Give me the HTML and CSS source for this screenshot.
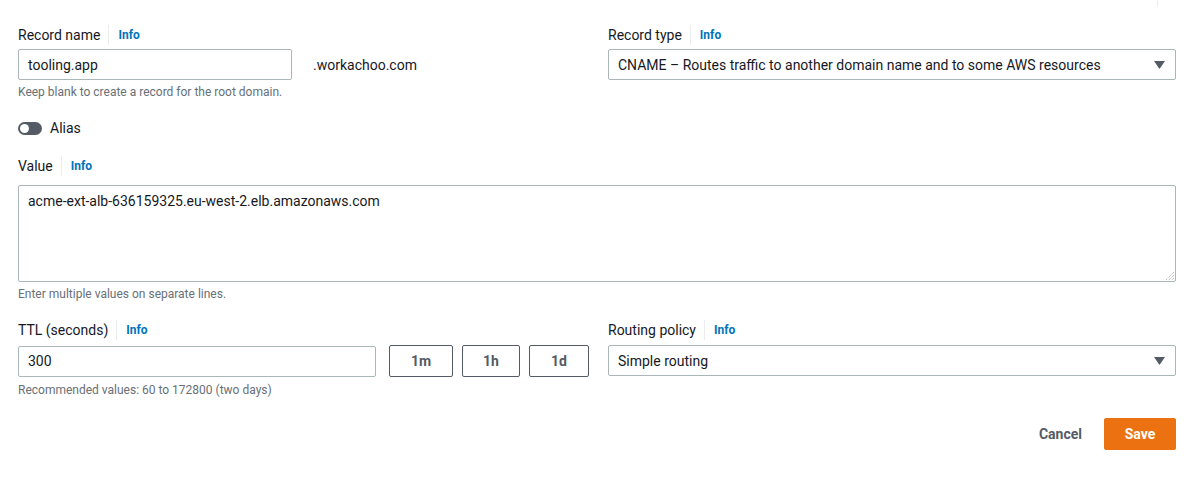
FILE: index.html
```html
<!DOCTYPE html>
<html>
<head>
<meta charset="utf-8">
<link rel="stylesheet" href="styles.css">
</head>
<body>
<form class="form">
  <div class="grid">
    <div class="field">
      <div class="label-row"><span class="label">Record name</span><span class="sep"></span><a class="info">Info</a></div>
      <div class="name-row">
        <div class="input name-input">tooling.app</div>
        <span class="suffix">.workachoo.com</span>
      </div>
      <div class="help">Keep blank to create a record for the root domain.</div>
    </div>
    <div class="field">
      <div class="label-row"><span class="label">Record type</span><span class="sep"></span><a class="info">Info</a></div>
      <div class="input select">
        <span>CNAME – Routes traffic to another domain name and to some AWS resources</span>
        <svg class="caret" width="11" height="8" viewBox="0 0 11 8"><path d="M0 0h11L5.5 8z" fill="#545b64"/></svg>
      </div>
    </div>
  </div>

  <div class="alias-row">
    <span class="toggle"><span class="knob"></span></span>
    <span class="alias-text">Alias</span>
  </div>

  <div class="value-field">
    <div class="label-row"><span class="label">Value</span><span class="sep"></span><a class="info">Info</a></div>
    <div class="textarea">acme-ext-alb-636159325.eu-west-2.elb.amazonaws.com
      <svg class="grip" width="9" height="9" viewBox="0 0 9 9"><path d="M9 1L1 9M9 4L4 9M9 7L7 9" stroke="#8a8f94" stroke-width="0.8" stroke-dasharray="1 1"/></svg>
    </div>
    <div class="help">Enter multiple values on separate lines.</div>
  </div>

  <div class="grid ttl-grid">
    <div class="field">
      <div class="label-row"><span class="label">TTL (seconds)</span><span class="sep"></span><a class="info">Info</a></div>
      <div class="ttl-row">
        <div class="input ttl-input">300</div>
        <button type="button" class="btn b1m">1m</button>
        <button type="button" class="btn b1h">1h</button>
        <button type="button" class="btn b1d">1d</button>
      </div>
      <div class="help ttl-help">Recommended values: 60 to 172800 (two days)</div>
    </div>
    <div class="field">
      <div class="label-row"><span class="label">Routing policy</span><span class="sep"></span><a class="info">Info</a></div>
      <div class="input select">
        <span>Simple routing</span>
        <svg class="caret" width="11" height="8" viewBox="0 0 11 8"><path d="M0 0h11L5.5 8z" fill="#545b64"/></svg>
      </div>
    </div>
  </div>

  <div class="actions">
    <button type="button" class="cancel">Cancel</button>
    <button type="button" class="save">Save</button>
  </div>
</form>
<span class="edge"></span>
</body>
</html>
```
FILE: styles.css
```css
* { box-sizing: border-box; }
body {
  margin: 0;
  background: #fff;
  font-family: Roboto, "Liberation Sans", sans-serif;
  color: #16191f;
  font-size: 14px;
}
.form {
  padding: 25px 27px 0 18px;
}
.grid {
  display: grid;
  grid-template-columns: 574px 1fr;
  column-gap: 16px;
}
.label-row {
  display: flex;
  align-items: center;
  height: 20px;
  margin-bottom: 4px;
}
.label { font-size: 14px; color: #16191f; }
.sep {
  width: 1px;
  height: 20px;
  background: #eaeded;
  margin: 0 9px 0 8px;
}
.info {
  font-size: 12px;
  font-weight: 700;
  color: #0073bb;
}
.input {
  height: 31px;
  border: 1px solid #aab7b8;
  border-radius: 2px;
  padding: 0 9px;
  display: flex;
  align-items: center;
  font-size: 14px;
  color: #16191f;
}
.name-row {
  display: flex;
  align-items: center;
}
.name-input { width: 274px; }
.suffix { margin-left: 21px; font-size: 14px; }
.select { justify-content: space-between; padding-right: 10px; }
.caret { flex: none; }
.help {
  font-size: 12px;
  color: #687078;
  line-height: 16px;
  margin-top: 4px;
}
.alias-row {
  display: flex;
  align-items: center;
  height: 20px;
  margin-top: 18px;
}
.toggle {
  width: 24px;
  height: 13px;
  border-radius: 7px;
  background: #545b64;
  position: relative;
  display: inline-block;
}
.knob {
  position: absolute;
  left: 2px;
  top: 2px;
  width: 9px;
  height: 9px;
  border-radius: 50%;
  background: #fff;
}
.alias-text { margin-left: 8px; font-size: 14px; }
.value-field { margin-top: 18px; }
.value-field .label-row { margin-bottom: 9px; }
.textarea {
  position: relative;
  height: 97px;
  border: 1px solid #aab7b8;
  border-radius: 2px;
  padding: 5px 9px;
  line-height: 20px;
  font-size: 14px;
}
.grip { position: absolute; right: 1px; bottom: 1px; }
.ttl-grid { margin-top: 18px; }
.ttl-grid .label-row { margin-bottom: 5px; }
.ttl-row { display: flex; align-items: center; }
.ttl-input { width: 358px; }
.ttl-help { margin-top: 5px; }
.btn {
  height: 32px;
  border: 1px solid #545b64;
  border-radius: 2px;
  background: #fff;
  color: #545b64;
  font-family: inherit;
  font-weight: 700;
  font-size: 14px;
  padding: 0;
}
.b1m { width: 64px; margin-left: 13px; }
.b1h { width: 58px; margin-left: 9px; }
.b1d { width: 60px; margin-left: 9px; }
.actions {
  display: flex;
  justify-content: flex-end;
  align-items: center;
  margin-top: 20px;
}
.cancel {
  background: none;
  border: none;
  font-family: inherit;
  font-weight: 700;
  font-size: 14px;
  color: #545b64;
  padding: 0;
  margin-right: 22px;
}
.save {
  width: 72px;
  height: 32px;
  background: #ec7211;
  border: 1px solid #ec7211;
  border-radius: 2px;
  color: #fff;
  font-family: inherit;
  font-weight: 700;
  font-size: 14px;
}
.edge {
  position: absolute;
  left: 1157px;
  top: 0;
  width: 1px;
  height: 7px;
  background: #eef0f0;
}
```
